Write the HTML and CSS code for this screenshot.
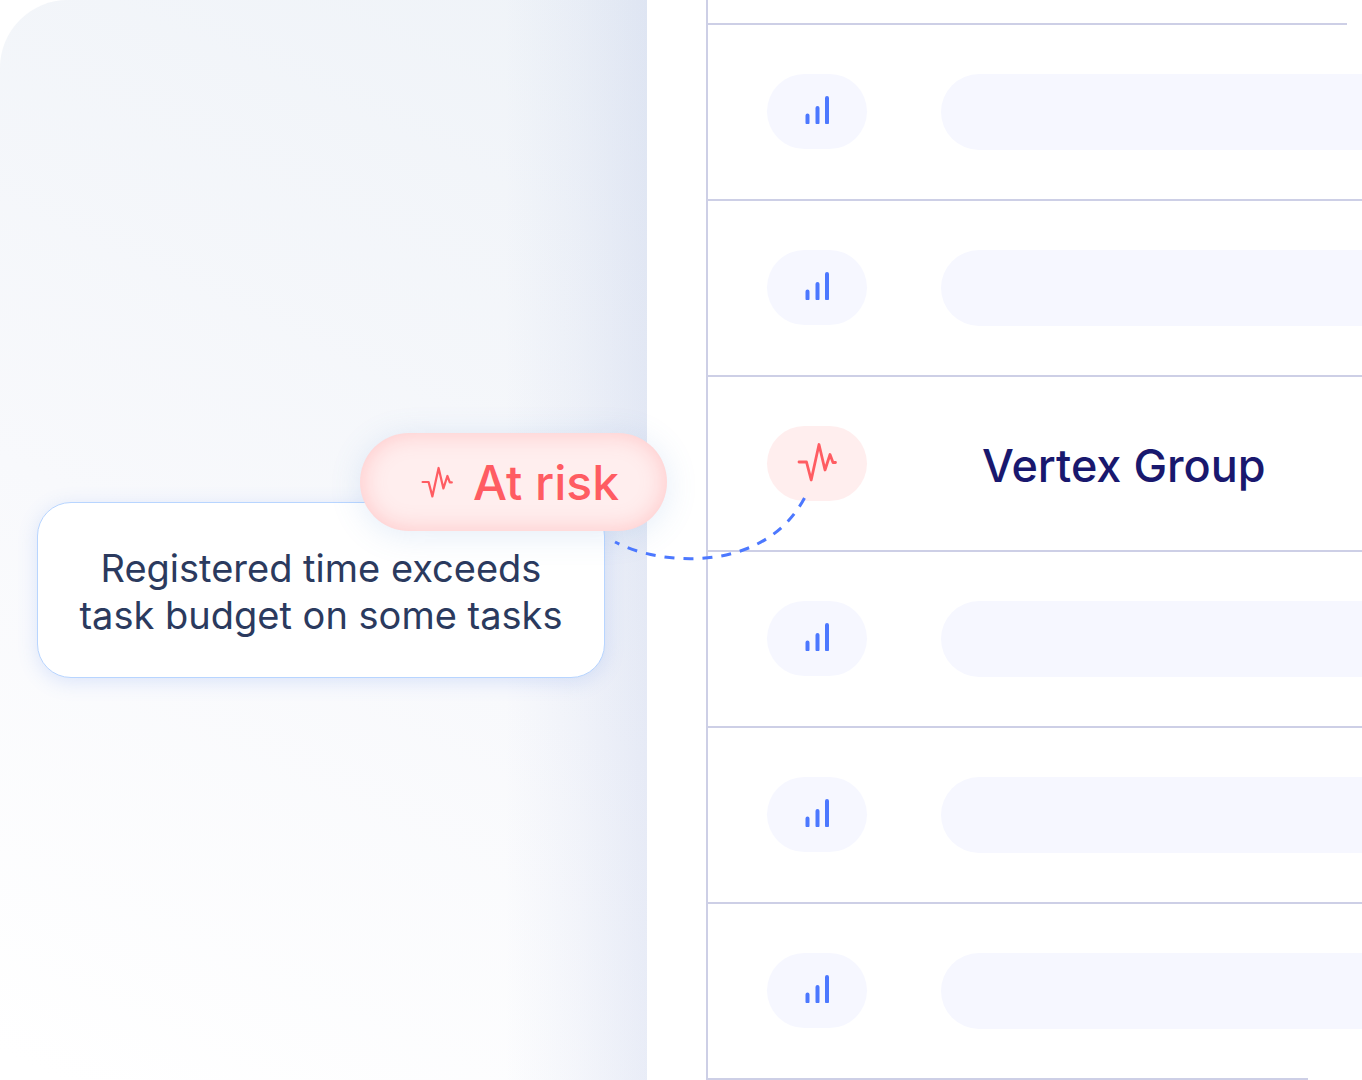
FILE: index.html
```html
<!DOCTYPE html>
<html lang="en">
<head>
  <meta charset="UTF-8">
  <meta name="viewport" content="width=device-width, initial-scale=1">
  <title>Vertex Group</title>
  <link rel="stylesheet" href="styles.css">
</head>
<body>

  <!-- Shared icons -->
  <svg class="sprite" aria-hidden="true">
    <symbol id="bars" viewBox="0 0 24 28">
      <path d="M2.5 19.5V26.5M12.5 12V26.5M22 2V26.5" fill="none" stroke="#4c78ff" stroke-width="4" stroke-linecap="round"/>
    </symbol>
    <symbol id="pulse" viewBox="0 0 40 40">
      <path d="M2 20H9.5L14.2 38L22 2.5L28 28L33 12.5L36 20.5H38.5" fill="none" stroke="#ff5c62" stroke-width="2.8" stroke-linecap="round" stroke-linejoin="round"/>
    </symbol>
  </svg>

  <main class="scene">
    <section class="panel">
      <div class="callout">
        <p class="callout-text">Registered time exceeds<br>task budget on some tasks</p>
        <div class="badge">
          <svg class="badge-icon" aria-hidden="true"><use href="#pulse"/></svg>
          <span>At risk</span>
        </div>
        <svg class="connector" viewBox="0 0 200 70" aria-hidden="true">
          <path d="M5 48C50 72 155 80 195 3"/>
        </svg>
      </div>
    </section>

    <section class="board">
      <div class="board-head"></div>
      <div class="row">
        <div class="pill"><svg class="bars-icon"><use href="#bars"/></svg></div>
        <div class="placeholder"></div>
      </div>
      <div class="row">
        <div class="pill"><svg class="bars-icon"><use href="#bars"/></svg></div>
        <div class="placeholder"></div>
      </div>
      <div class="row row-risk">
        <div class="pill pill-risk"><svg class="pulse-icon"><use href="#pulse"/></svg></div>
        <h2 class="client">Vertex Group</h2>
      </div>
      <div class="row">
        <div class="pill"><svg class="bars-icon"><use href="#bars"/></svg></div>
        <div class="placeholder"></div>
      </div>
      <div class="row">
        <div class="pill"><svg class="bars-icon"><use href="#bars"/></svg></div>
        <div class="placeholder"></div>
      </div>
      <div class="row row-last">
        <div class="pill"><svg class="bars-icon"><use href="#bars"/></svg></div>
        <div class="placeholder"></div>
      </div>
    </section>
  </main>

</body>
</html>
```
FILE: styles.css
```css
* {
  box-sizing: border-box;
}

body {
  margin: 0;
  background: #fff;
  font-family: Inter, "Liberation Sans", sans-serif;
  overflow-x: hidden;
}

.sprite {
  position: absolute;
  width: 0;
  height: 0;
}

.scene {
  display: grid;
  grid-template-columns: 47.5% 1fr;
  min-height: 100vh;
}

/* Left side */
.panel {
  display: flex;
  align-items: center;
  padding: 100px 42px 0 37px;
  border-top-left-radius: 68px;
  background:
    linear-gradient(90deg, rgba(140, 160, 215, 0) 78%, rgba(140, 160, 215, 0.07) 89%, rgba(140, 160, 215, 0.17)),
    linear-gradient(205deg, #eff3f8, #f8f9fc 55%, #fff 98%);
}

.callout {
  position: relative;
  z-index: 1;
  flex: 1;
  padding: 42px 0 38px;
  border: 1px solid #b8d5ff;
  border-radius: 34px;
  background: #fff;
  box-shadow: 0 4px 20px rgba(76, 130, 240, 0.18);
}

.callout-text {
  margin: 0;
  color: #2b3a5e;
  font-size: 38px;
  line-height: 47px;
  text-align: center;
  white-space: nowrap;
}

.badge {
  position: absolute;
  top: -70px;
  right: -63px;
  display: flex;
  align-items: center;
  gap: 20px;
  width: 307px;
  height: 98px;
  padding-left: 61px;
  border-radius: 49px;
  background: #ffeeee;
  box-shadow: inset 0 0 24px rgba(255, 92, 98, 0.28), 0 4px 32px rgba(90, 140, 210, 0.16);
  color: #ff5c62;
  font-size: 48px;
  font-weight: 500;
  white-space: nowrap;
}

.badge-icon {
  width: 32px;
  height: 32px;
}

.connector {
  position: absolute;
  top: -9px;
  left: calc(100% + 6px);
  width: 200px;
  height: 70px;
}

.connector path {
  fill: none;
  stroke: #4c78ff;
  stroke-width: 3;
  stroke-dasharray: 10 9;
  stroke-dashoffset: 5;
}

/* Right side */
.board {
  min-width: 0;
  margin-left: 59px;
  border-left: 2px solid #cdcfe6;
}

.board-head {
  height: 25px;
  margin-right: 15px;
  border-bottom: 2px solid #cdcfe6;
}

.row {
  display: flex;
  align-items: flex-start;
  gap: 74px;
  height: 176px;
  padding: 49px 0 0 59px;
  border-bottom: 2px solid #cdcfe6;
}

.row-risk {
  height: 175px;
}

/* the last line stops short of the edge */
.row-last {
  border-bottom: 0;
  background: linear-gradient(#cdcfe6, #cdcfe6) 0 100% / calc(100% - 54px) 2px no-repeat;
}

.pill {
  display: flex;
  flex-shrink: 0;
  align-items: center;
  justify-content: center;
  width: 100px;
  height: 75px;
  padding-bottom: 3px;
  border-radius: 40px;
  background: #f6f7ff;
}

.pill-risk {
  background: #ffeeee;
}

.bars-icon {
  width: 24px;
  height: 28px;
}

.pulse-icon {
  width: 40px;
  height: 40px;
}

.placeholder {
  flex: 1;
  height: 76px;
  border-radius: 38px 0 0 38px;
  background: #f6f7ff;
}

.client {
  margin: 0;
  padding-left: 41px;
  color: #19186e;
  font-size: 45px;
  font-weight: 500;
  line-height: 80px;
  white-space: nowrap;
}
```
